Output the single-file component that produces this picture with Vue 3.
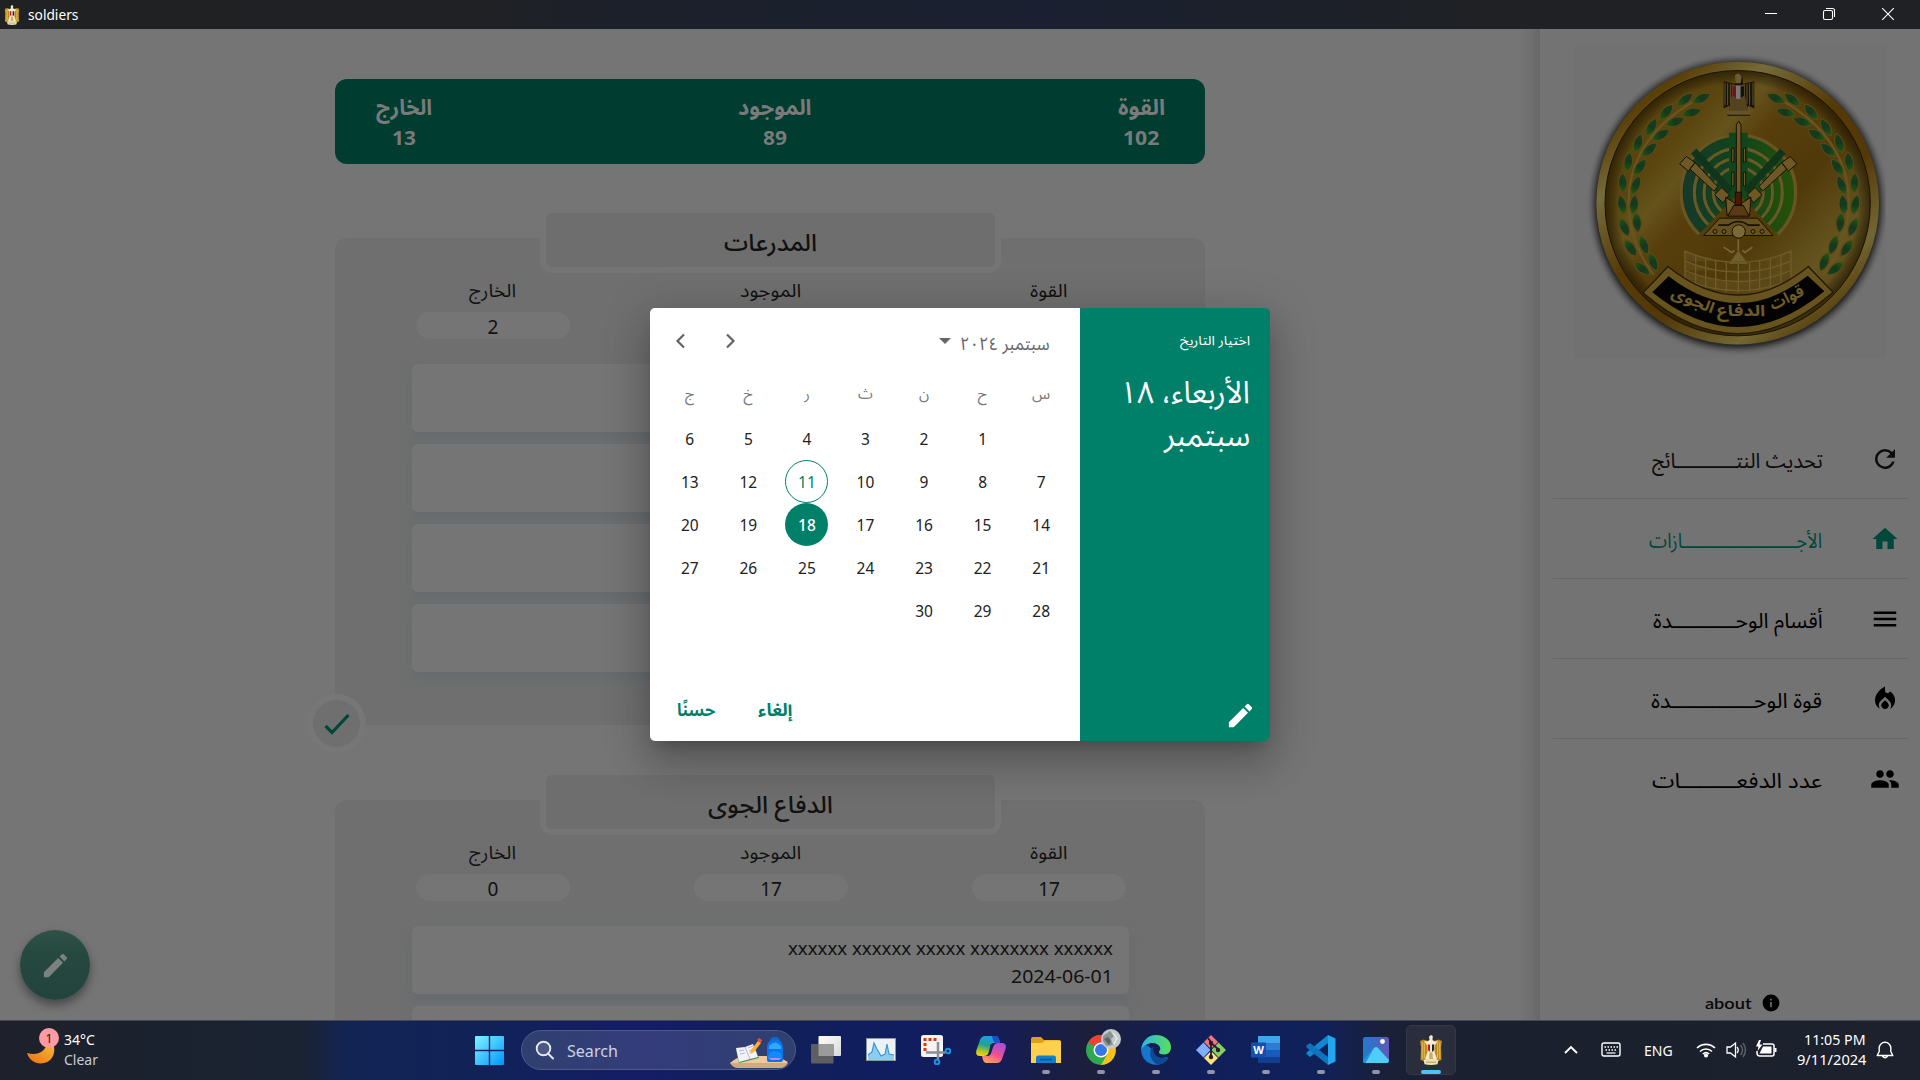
<script setup>
const vFit = {
  mounted(el, { value }) {
    const natural = el.offsetWidth
    if (!natural) return
    el.style.transform = `scaleX(${value / natural})`
    el.style.marginRight = `${value - natural}px`
  },
}

const totals = [
  { label: 'الخارج', w: 56, n: '13', nw: 24 },
  { label: 'الموجود', w: 74, n: '89', nw: 24 },
  { label: 'القوة', w: 47, n: '102', nw: 36 },
]
const units = [
  { name: 'المدرعات', w: 93, stats: ['2', '', ''], rows: [{}, {}, {}, {}] },
  {
    name: 'الدفاع الجوى', w: 125, stats: ['0', '17', '17'],
    rows: [{ name: 'xxxxxx xxxxxx xxxxx xxxxxxxx xxxxxx', date: '2024-06-01' }, {}],
  },
]
const statLabels = [
  { t: 'الخارج', w: 47 },
  { t: 'الموجود', w: 61 },
  { t: 'القوة', w: 38 },
]
const menu = [
  { t: 'تحديث النتـــــــــــائج', w: 171, d: ['M17.65 6.35A7.96 7.96 0 0 0 12 4a8 8 0 1 0 7.73 10h-2.08A6 6 0 1 1 12 6c1.66 0 3.14.69 4.22 1.78L13 11h7V4z'], c: '#0c0c0c' },
  { t: 'الأجـــــــــــــــــــــــازات', w: 173, d: ['M10 20v-6h4v6h5v-8h3L12 3 2 12h3v8z'], c: '#00483a' },
  { t: 'أقسام الوحـــــــــــدة', w: 170, d: ['M3 18h18v-2H3zm0-5h18v-2H3zm0-7v2h18V6z'], c: '#000' },
  { t: 'قوة الوحــــــــــــــدة', w: 171, d: ['M12 12.9l-2.13 2.09c-.56.56-.87 1.29-.87 2.07C9 18.68 10.35 20 12 20s3-1.32 3-2.94c0-.78-.31-1.52-.87-2.07z', 'M16 6l-.44.55C14.38 8.02 12 7.19 12 5.3V2S4 6 4 13c0 2.92 1.56 5.47 3.89 6.86C7.33 19.07 7 18.1 7 17.06c0-1.32.52-2.56 1.47-3.5L12 10.1l3.53 3.47c.95.93 1.47 2.17 1.47 3.5 0 1.02-.31 1.96-.85 2.75 1.89-1.15 3.29-3.06 3.71-5.3C20.52 10.97 18.79 7.62 16 6z'], c: '#000' },
  { t: 'عدد الدفعـــــــــات', w: 170, d: ['M16 11c1.66 0 2.99-1.34 2.99-3S17.66 5 16 5s-3 1.34-3 3 1.34 3 3 3zm-8 0c1.66 0 2.99-1.34 2.99-3S9.66 5 8 5 5 6.34 5 8s1.34 3 3 3zm0 2c-2.33 0-7 1.17-7 3.5V19h14v-2.5c0-2.33-4.67-3.5-7-3.5zm8 0c-.29 0-.62.02-.97.05 1.16.84 1.97 1.97 1.97 3.45V19h6v-2.5c0-2.33-4.67-3.5-7-3.5z'], c: '#000' },
]
const weekdays = ['ج', 'خ', 'ر', 'ث', 'ن', 'ح', 'س']
const weeks = [
  [6, 5, 4, 3, 2, 1, ''],
  [13, 12, 11, 10, 9, 8, 7],
  [20, 19, 18, 17, 16, 15, 14],
  [27, 26, 25, 24, 23, 22, 21],
  ['', '', '', '', 30, 29, 28],
]
const pencil = 'M3 17.25V21h3.75L17.81 9.94l-3.75-3.75zM20.71 7.04a1 1 0 0 0 0-1.41l-2.34-2.34a1 1 0 0 0-1.41 0l-1.83 1.83 3.75 3.75z'
const leaves = [
  [466, 299, -38], [410, 336, -50], [365, 382, -60], [325, 430, -72], [296, 486, -82], [279, 549, -92], [277, 614, -102], [284, 682, 66], [303, 745, 54], [337, 806, 38],
  [515, 296, -26], [486, 338, -14], [436, 366, -20], [394, 405, -32], [359, 450, -42], [331, 502, -55], [318, 556, -68], [313, 614, -84], [322, 668, 84], [343, 736, 70], [370, 786, 68],
]
const rings = [132, 103, 75]
const apps = ['taskview', 'monitor', 'snip', 'copilot', 'files', 'chrome', 'edge', 'git', 'word', 'code', 'photos', 'eagle']
</script>

<template>
  <div class="screen">
    <svg class="defs" width="0" height="0">
      <defs>
        <symbol id="eagle" viewBox="0 0 24 30">
          <path d="M1 6l3.500-1.500L9 6h6l4.500-1.500L23 6l-1 6 .5 13-3.500 1-3-4-2-5h-4l-2 5-3 4-3.500-1L2 12z" fill="#b98a1c" />
          <path d="M3.200 7v17M5.300 7.500V23M18.700 7.500V23M20.800 7v17" stroke="#ecc75a" stroke-width=".9" fill="none" />
          <path d="M10 1.800L12 0l1.800 1-.3 4 2.500 1.500 3-.5-3 4-.5 7 2.500 7h-12l2.500-7L8 10 5 6l3 .5L10.500 5z" fill="#f3ead2" />
          <path d="M8.800 9.500h2.200v7.500l-2.200-2z" fill="#d0122c" /><path d="M13 9.500h2.200V15L13 17z" fill="#222" />
          <path d="M10.500 18l1.500-1 1.500 1 .5 6h-4z" fill="#c9ac62" />
          <path d="M4.500 25q3.500-2 7.500-1 4-1 7.500 1l-1 4.300q-6.500 1.200-13 0z" fill="#ede0b8" /><path d="M7 27.200h10" stroke="#b58d2c" stroke-width=".8" />
        </symbol>
      </defs>
    </svg>

    <header class="titlebar">
      <svg class="t-ico" width="16" height="20"><use href="#eagle" /></svg>
      <span class="t-name" v-fit="50">soldiers</span>
      <svg class="t-ctl" width="150" height="29" viewBox="0 0 150 29" fill="none" stroke="#fff" stroke-width="1.100">
        <path d="M15 13.500h12M132.200 8.200l11.600 11.600M143.800 8.200l-11.600 11.600" />
        <rect x="73.500" y="10.500" width="9" height="9" rx="1.500" /><path d="M76 8.500h6.500a2 2 0 0 1 2 2V17" />
      </svg>
    </header>

    <div class="app">
      <main class="main">
        <section class="totals">
          <div v-for="s in totals" :key="s.label" class="total">
            <span class="lbl" dir="rtl" v-fit="s.w">{{ s.label }}</span>
            <span class="num" v-fit="s.nw">{{ s.n }}</span>
          </div>
        </section>

        <section v-for="(u, i) in units" :key="u.name" class="unit">
          <h2 class="tab"><span dir="rtl" v-fit="u.w">{{ u.name }}</span></h2>
          <div class="stats">
            <div v-for="(s, k) in u.stats" :key="k" class="stat">
              <div class="slabel"><span dir="rtl" v-fit="statLabels[k].w">{{ statLabels[k].t }}</span></div>
              <div class="pill">{{ s }}</div>
            </div>
          </div>
          <div class="rows">
            <article v-for="(r, k) in u.rows" :key="k" class="row">
              <div v-if="r.name"><span v-fit="325">{{ r.name }}</span></div>
              <div v-if="r.date"><span v-fit="102">{{ r.date }}</span></div>
            </article>
          </div>
          <div v-if="i === 0" class="check">
            <svg width="30" height="30" viewBox="0 0 30 30"><path d="M3.500 17l6.500 6.500L26.500 6" fill="none" stroke="#00473a" stroke-width="3.200" /></svg>
          </div>
        </section>

        <button class="fab"><svg width="31" height="31" viewBox="0 0 24 24"><path :d="pencil" fill="#7b8180" /></svg></button>
      </main>

      <aside class="side">
        <svg class="emblem" width="312" height="313" viewBox="133 136 936 938">
          <defs>
            <linearGradient id="rim" x1=".1" y1="0" x2=".9" y2="1">
              <stop offset="0" stop-color="#6b6232" /><stop offset=".12" stop-color="#5a3f08" /><stop offset=".25" stop-color="#756b3a" /><stop offset=".45" stop-color="#563a06" /><stop offset=".62" stop-color="#543908" /><stop offset=".8" stop-color="#716733" /><stop offset=".92" stop-color="#553a08" /><stop offset="1" stop-color="#6e6433" />
            </linearGradient>
            <linearGradient id="face" x1="0" y1=".05" x2="1" y2=".95">
              <stop offset="0" stop-color="#55410d" /><stop offset=".25" stop-color="#5a450f" /><stop offset=".33" stop-color="#65531c" /><stop offset=".42" stop-color="#573e0c" /><stop offset=".6" stop-color="#50390a" /><stop offset=".78" stop-color="#655520" /><stop offset="1" stop-color="#54400f" />
            </linearGradient>
            <radialGradient id="inner"><stop offset=".9" stop-color="#000" stop-opacity="0" /><stop offset="1" stop-color="#1a1000" stop-opacity=".6" /></radialGradient>
            <radialGradient id="halo"><stop offset=".93" stop-color="#2b2b2b" /><stop offset=".955" stop-color="#484848" stop-opacity=".75" /><stop offset="1" stop-color="#717171" stop-opacity="0" /></radialGradient>
            <linearGradient id="grn"><stop offset="0" stop-color="#17382a" /><stop offset=".5" stop-color="#0f451b" /><stop offset="1" stop-color="#285207" /></linearGradient>
            <linearGradient id="leaf"><stop offset="0" stop-color="#1d5a12" /><stop offset=".5" stop-color="#14381d" /><stop offset="1" stop-color="#173f1e" /></linearGradient>
            <clipPath id="disc"><path d="M626 580L748 708H870V340H380V708H504z" /></clipPath>
            <clipPath id="eclip"><rect x="133" y="136" width="936" height="938" /></clipPath>
          </defs>
          <rect x="133" y="136" width="936" height="938" fill="#717171" />
          <circle cx="624" cy="614" r="456" fill="url(#halo)" clip-path="url(#eclip)" />
          <circle cx="624" cy="610" r="424" fill="url(#rim)" />
          <circle cx="624" cy="610" r="398" fill="url(#face)" stroke="#1c1405" stroke-width="3" />
          <circle cx="624" cy="610" r="398" fill="url(#inner)" />
          <g v-for="m in [0, 1]" :key="m" :transform="m ? 'translate(1254 0) scale(-1 1)' : ''">
            <path d="M520 290C400 350 300 450 297 600C295 700 330 770 372 825" fill="none" stroke="#6a5520" stroke-width="7" />
            <path v-for="(l, k) in leaves" :key="k" d="M-30 0C-15 -17 13 -17 30 0C13 17 -15 17 -30 0z" :transform="`translate(${l[0]} ${l[1]}) rotate(${l[2]})`" fill="url(#leaf)" stroke="#5d4a18" stroke-width="3" />
          </g>
          <g clip-path="url(#disc)">
            <circle cx="626" cy="578" r="176" fill="url(#grn)" />
            <circle cx="626" cy="578" r="172" fill="none" stroke="#6a5421" stroke-width="10" />
            <circle v-for="r in rings" :key="r" cx="626" cy="578" :r="r" fill="none" stroke="#6a5826" stroke-width="9" />
            <path d="M598 399h56v187h-56z" fill="#11451c" />
            <path d="M484 462l16-16 110 120-14 16zM768 462l-16-16-110 120 14 16z" fill="#11351a" />
          </g>
          <g fill="#6d5826" stroke="#181004" stroke-width="3">
            <path d="M620 375l7-11 7 11v205h-14zM606 445h7v42h-7zM641 445h7v42h-7zM606 517h7v42h-7zM641 517h7v42h-7z" />
            <g v-for="m in [0, 1]" :key="m" :transform="m ? 'translate(1252 0) scale(-1 1)' : ''">
              <path d="M470 470l26 18-20 26-26-22zM496 488l68 72-11 14-72-66zM576 563l23 22-19 24-25-24zM588 592l28 18v18l-24 18z" />
            </g>
            <path d="M617 577h18v38h-18z" fill="#471906" /><path d="M612 617h29l18 32h-65z" fill="#5a3a10" />
            <path d="M570 655h114l46 52H522z" fill="#65511f" /><path d="M566 676h30q30-22 60 0h34" fill="none" stroke-width="5" />
            <circle cx="556" cy="695" r="6" /><circle cx="583" cy="695" r="6" /><circle cx="670" cy="695" r="6" /><circle cx="697" cy="695" r="6" />
            <circle cx="627" cy="695" r="20" fill="#786936" />
          </g>
          <path d="M626 718v35M582 742l24 16 8-6M668 742l-22 16-8-6" fill="none" stroke="#77683a" stroke-width="5" />
          <path d="M626 752l28 40h-56z" fill="#706030" />
          <g fill="none" stroke="#6d5c27" stroke-width="4">
            <path d="M466 754Q626 822 784 754V840Q626 905 466 840zM466 784Q626 850 784 784M466 812Q626 878 784 812" fill="#5b4717" />
            <path d="M498 766v90M528 776v90M558 783v88M590 788v88M626 790v88M660 788v88M690 783v88M722 776v90M754 766v90" />
          </g>
          <path d="M415 800Q626 971 836 800L910 877Q626 1125 340 879z" fill="#67531d" stroke="#251a06" stroke-width="4" />
          <path d="M417 829Q626 991 834 828L884 874Q626 1087 368 877z" fill="#030303" />
          <g class="motto" fill="#6f5b28" text-anchor="middle">
            <text transform="translate(778 908) rotate(-26)" font-size="46" textLength="108" lengthAdjust="spacingAndGlyphs">قوات</text>
            <text transform="translate(634 949)" font-size="46" textLength="146" lengthAdjust="spacingAndGlyphs">الدفاع</text>
            <text transform="translate(484 916) rotate(22)" font-size="46" textLength="136" lengthAdjust="spacingAndGlyphs">الجوى</text>
          </g>
          <path d="M582 244l34 8 2-22 10-10 10 10 2 22 34-8v82l-18-8-6 10 12 20h-70l12-20-6-10-16 8z" fill="#18130a" />
          <path d="M586 248v68M594 250v66M602 252v60M652 252v60M660 250v66M670 248v68" stroke="#66542a" stroke-width="3" />
          <path d="M606 252q20 10 40 0v34l10 54h-60l10-54z" fill="#54431e" /><path d="M616 226q12-12 20 4l-3 20h-16z" fill="#6b5a32" />
          <path d="M609 260h10v34l-10-6z" fill="#7a0c22" /><path d="M619 257h14v40h-14z" fill="#777" /><path d="M633 260h10v28l-10 6z" fill="#111" />
          <path d="M592 333h72l-4 12h-64z" fill="#66532a" />
        </svg>
        <nav class="menu">
          <div v-for="m in menu" :key="m.t" class="item" :style="{ color: m.c }">
            <span class="mtext" dir="rtl" v-fit="m.w">{{ m.t }}</span>
            <svg width="30" height="30" viewBox="0 0 24 24" fill="currentColor"><path v-for="d in m.d" :key="d" :d="d" /></svg>
          </div>
        </nav>
        <div class="about">
          <span v-fit="46">about</span>
          <svg width="18" height="18" viewBox="0 0 18 18"><circle cx="9" cy="9" r="8.400" /><path d="M9 8v5.200M9 4.700v1.800" stroke="#737373" stroke-width="1.600" /></svg>
        </div>
      </aside>
    </div>

    <footer class="taskbar">
      <div class="weather">
        <svg width="36" height="48" viewBox="0 0 36 48">
          <defs><linearGradient id="moon" x1="1" y1="0" x2=".3" y2="1"><stop offset="0" stop-color="#f8c63c" /><stop offset="1" stop-color="#ee7a16" /></linearGradient></defs>
          <path d="M25 12C31 22 29 35 18 37C10 39 3 34 1 27C11 30 20 26 21 16z" fill="url(#moon)" />
          <circle cx="23" cy="12" r="10" fill="#ff99a4" />
          <text x="23" y="17" text-anchor="middle" font-size="13" fill="#222">1</text>
        </svg>
        <div class="wtext"><span v-fit="31">34°C</span><span class="dim" v-fit="34">Clear</span></div>
      </div>
      <svg class="start" width="29" height="29" viewBox="0 0 29 29">
        <defs><linearGradient id="win" x1="0" y1="0" x2="1" y2="1"><stop offset="0" stop-color="#80f3ff" /><stop offset="1" stop-color="#0096ff" /></linearGradient></defs>
        <path d="M0 1q0-1 1-1h12.800v13.800H0zM15.200 0H28q1 0 1 1v12.800H15.200zM0 15.200h13.800V29H1q-1 0-1-1zM15.200 15.200H29V28q0 1-1 1H15.200z" fill="url(#win)" />
      </svg>
      <div class="search">
        <svg width="20" height="20" viewBox="0 0 20 20" fill="none" stroke="#e6e8f2" stroke-width="1.900"><circle cx="8.500" cy="8.500" r="6.800" fill="#ffffff22" /><path d="M13 13.500l5 5" stroke-linecap="round" /></svg>
        <span v-fit="51">Search</span>
        <svg class="s-art" width="58" height="32" viewBox="0 0 58 32">
          <path d="M0 26q7-6 14-7h32q7 3 12 6l-5 4H6z" fill="#ecc99e" /><path d="M0 26h58q-3 5-8 5H8q-5 0-8-5z" fill="#d2aa7b" />
          <path d="M6 13l18-4 5 12-20 5z" fill="#3e9b4f" /><path d="M6 11l9-1 8-3 5 13-8 2-11 3z" fill="#f4f2fb" /><path d="M15 10l5 12M9 14l5-1M10 17l5-1M18 11l5-2M19 14l5-2" stroke="#b9b4cf" />
          <path d="M21 13l7-9 3 2-7 9-4 2z" fill="#ffb02e" /><path d="M27 3l2-2 3 2-1 3z" fill="#f04b3b" />
          <path d="M41 3q4-5 8 0" fill="none" stroke="#1267c9" stroke-width="2" />
          <path d="M37 10q1-8 8-8t8 8v13q0 2-2 2H39q-2 0-2-2z" fill="#0a75ea" /><path d="M39 9q6-7 12 0v3H39z" fill="#35a7ff" /><path d="M38 20q1-6 7-6t7 6v2H38z" fill="#118aff" /><path d="M39 21h12l-2 2H41z" fill="#b58bfa" />
        </svg>
      </div>
      <div class="apps">
        <div v-for="a in apps" :key="a" class="slot" :class="{ active: a === 'eagle', run: apps.indexOf(a) > 3 }">
          <svg width="30" height="30" viewBox="0 0 30 30">
            <template v-if="a === 'taskview'">
              <defs><linearGradient id="tv" x1="0" y1="0" x2="1" y2="1"><stop offset="0" stop-color="#fff" /><stop offset="1" stop-color="#d9d9d9" /></linearGradient></defs>
              <rect x="7.500" y="1" width="22.500" height="20" rx="1" fill="url(#tv)" /><rect x="0" y="9" width="22.500" height="19.500" rx="1" fill="#5e5e60" /><rect x="7.500" y="9" width="15" height="12" fill="#9b9b9b" />
            </template>
            <template v-else-if="a === 'monitor'">
              <rect x=".5" y="3.500" width="29" height="22" fill="#edf2f6" stroke="#8b97a3" /><path d="M2 20l4-3 2-9 3 6 4 7 4-2 2-10 2 10 5 1v5H2z" fill="#8bcdf2" /><path d="M2 20l4-3 2-9 3 6 4 7 4-2 2-10 2 10 5 1" fill="none" stroke="#3c96cf" stroke-width="1.200" />
            </template>
            <template v-else-if="a === 'snip'">
              <rect width="22" height="22" rx="2.500" fill="#f4f4f4" /><path d="M4 16V4.500h13" fill="none" stroke="#d83b01" stroke-width="3" stroke-dasharray="3 2" />
              <path d="M5 17.500h19M17 7v17" stroke="#8b9096" stroke-width="2.500" /><circle cx="27" cy="16" r="2.300" fill="none" stroke="#1c93e0" stroke-width="2" /><circle cx="16" cy="27" r="2.300" fill="none" stroke="#1c93e0" stroke-width="2" />
            </template>
            <template v-else-if="a === 'copilot'">
              <defs><linearGradient id="cp1" x1=".5" x2=".2" y2="1"><stop offset="0" stop-color="#1f9dea" /><stop offset=".45" stop-color="#1fa391" /><stop offset=".75" stop-color="#a9c42a" /><stop offset="1" stop-color="#ffd500" /></linearGradient><linearGradient id="cp2" x1=".8" x2=".3" y2="1"><stop offset="0" stop-color="#a04fe0" /><stop offset=".55" stop-color="#ee4f93" /><stop offset="1" stop-color="#ffa05b" /></linearGradient></defs>
              <path d="M9 1h11q2 0 3 3l1 4h-5q-3 0-4 3l-2 6q-1 4-5 4H4q-5 0-3.500-6L4 5q1.500-4 5-4z" fill="url(#cp1)" /><path d="M16 1h4q2 0 3 3l1 4h-4q-2 0-3-3z" fill="#1a50c8" />
              <path d="M21 28H10q-2 0-3-3l-1-4h5q3 0 4-3l2-6q1-4 5-4h4q5 0 3.500 6L26 24q-1.500 4-5 4z" fill="url(#cp2)" />
              <path d="M14.500 9.500L17 8h3q-2 1-3 4l-2 6q-.6 1.800-2 2.600L10.500 21q1.700-1 2.500-4z" fill="#16205c" />
            </template>
            <template v-else-if="a === 'files'">
              <path d="M0 4q0-2 2-2h8l3 3h15q2 0 2 2v4H0z" fill="#e0a013" /><path d="M0 8h11l3-2.500h14q2 0 2 2V28H0z" fill="#ffd04c" /><path d="M5 28v-5q0-2.500 2.500-2.500h15q2.500 0 2.500 2.500v5z" fill="#1779cf" /><path d="M9 24.500h12" stroke="#0b4f91" stroke-width="1.400" />
            </template>
            <template v-else-if="a === 'chrome'">
              <circle cx="15" cy="15" r="15" fill="#2da94f" /><path d="M15 15L2 7.500A15 15 0 0 1 28 7.500H15z" fill="#ea4335" /><path d="M15 8h13a15 15 0 0 1-13 22l6.500-11z" fill="#fbc116" /><circle cx="15" cy="15" r="7.500" fill="#fff" /><circle cx="15" cy="15" r="6" fill="#3577e5" />
            </template>
            <template v-else-if="a === 'edge'">
              <defs><linearGradient id="ed1"><stop offset="0" stop-color="#2cb4e8" /><stop offset="1" stop-color="#5ae05a" /></linearGradient></defs>
              <path d="M0 15A15 15 0 0 0 26 25Q28 22 25 22Q16 25 12 18Q10 10 3 10Z" fill="#1476cc" />
              <path d="M0 15C1 6 7 0 15 0c9 0 15 6 15 12 0 5-3 7.500-7 7.500-3 0-5-1-5-2.300s2-2.200 1-5C17 7 6 5 0 15z" fill="url(#ed1)" />
              <path d="M12.500 11.500C7 14 8 26 17 29.800c4-.3 7-2.300 9-4.800q1.500-2.500-1-2.500C17 25 11 19 12.500 11.500z" fill="#0c4a94" />
              <path d="M18.500 13c-2.500-2.500-5.500-1.500-6.300 1.500" fill="none" stroke="#13245a" stroke-width="1.500" />
            </template>
            <template v-else-if="a === 'git'">
              <path d="M15 0l7 7-7 7-7-7z" fill="#f8727b" /><path d="M7.500 7.500l7 7.500-7 7.500L0 15z" fill="#7fb0ff" /><path d="M22.500 7.500L30 15l-7.500 7.500-7-7.500z" fill="#88cf5b" /><path d="M15 16l7 7-7 7-7-7z" fill="#ffe07a" />
              <path d="M12 3l3 4v15M15 8l7 6" stroke="#221d33" stroke-width="1.800" fill="none" /><circle cx="15" cy="8" r="2.200" fill="#221d33" /><circle cx="15" cy="22" r="2.200" fill="#221d33" /><circle cx="22" cy="15" r="2.200" fill="#221d33" />
            </template>
            <template v-else-if="a === 'word'">
              <path d="M7 1h22v7H7z" fill="#41a5ee" /><path d="M7 8h22v7H7z" fill="#2b7cd3" /><path d="M7 15h22v7H7z" fill="#185abd" /><path d="M7 22h22v6H7z" fill="#103f91" /><rect x="0" y="7.500" width="15" height="15" rx="1" fill="#1650ad" /><text x="7.500" y="19" font-size="11" font-weight="700" text-anchor="middle" fill="#fff">W</text>
            </template>
            <template v-else-if="a === 'code'">
              <path d="M22 0l7.500 3.500v23L22 30z" fill="#23a5f0" /><path d="M22 0v8L4 22l-3.500-3v-1.500z" fill="#1386d4" /><path d="M22 30v-8L4 8 .5 10.500v2z" fill="#0c75bd" />
            </template>
            <template v-else-if="a === 'photos'">
              <defs><linearGradient id="ph" x1="0" x2="1"><stop offset="0" stop-color="#1f7bd0" /><stop offset="1" stop-color="#6059b6" /></linearGradient></defs>
              <rect x="2" y="2" width="26" height="26" rx="2.500" fill="url(#ph)" /><path d="M2.500 26L13 13q2-2 4 0l11 12q0 3-2.500 3H5z" fill="#4dcdf8" /><path d="M13 13L4.500 28H3q-1-1-1-3z" fill="#1e93da" /><circle cx="21.500" cy="6.500" r="2.400" fill="#fff" />
            </template>
            <use v-else href="#eagle" x="3" y="0" width="24" height="30" />
          </svg>
          <svg v-if="a === 'chrome'" class="avatar" width="20" height="20" viewBox="0 0 20 20"><circle cx="10" cy="10" r="10" fill="#c3c9c9" /><path d="M2 7l7-5 4 5-3 3 2 6-7 1-3-5z" fill="#8b9494" /><path d="M3 10l4-2 3 4-2 4z" fill="#5b6464" /><path d="M12 4l4 5-3 6" stroke="#e6eaea" fill="none" stroke-width="1.500" /></svg>
        </div>
      </div>
      <div class="tray">
        <svg width="190" height="60" viewBox="1550 1020 190 60" fill="none" stroke="#fff" stroke-width="1.600">
          <path d="M1565 1053l6-6 6 6" stroke-width="1.900" />
          <rect x="1602" y="1043" width="18" height="13" rx="2" stroke-width="1.400" /><path d="M1604.500 1047h14M1605.500 1050h12" stroke-dasharray="1.500 1.500" /><path d="M1606.500 1053h9" stroke-width="1.200" />
          <g transform="translate(-.5 0)"><path d="M1697.500 1048a13 13 0 0 1 18 0M1700.500 1051.500a8.500 8.500 0 0 1 12 0M1703.300 1054a5 5 0 0 1 6.400 0" /><circle cx="1706.500" cy="1055.500" r="1.300" fill="#fff" /></g>
          <path d="M1727 1047h3.500l5-4v14l-5-4h-3.500z" stroke-width="1.300" /><path d="M1737 1047q2.500 3 0 6" stroke-width="1.300" />
        </svg>
        <svg width="40" height="60" viewBox="1740 1020 40 60" fill="none" stroke="#fff" stroke-width="1.500">
          <path d="M1740.500 1045q4 5 0 10M1743 1043q5 7 0 14" stroke="#5b606b" />
          <path d="M1763 1044h9q2 0 2 2v8q0 2-2 2h-12q-3 0-3-3v-2" /><path d="M1775.500 1048v4" stroke-width="2" /><path d="M1763 1046.500h8.500v7h-12z" fill="#fff" stroke="none" /><path d="M1759 1040l-3 6.500h2.500l-1 4.500 5-6.500h-3l1.500-4.500z" fill="#fff" stroke="none" />
        </svg>
        <span class="eng"><span v-fit="29">ENG</span></span>
        <div class="clock"><span v-fit="62">11:05 PM</span><span v-fit="69">9/11/2024</span></div>
        <svg class="bell" width="18" height="20" viewBox="0 0 18 20" fill="none" stroke="#fff" stroke-width="1.400"><path d="M1.200 15.500l2-4V8a5.800 5.800 0 0 1 11.600 0v3.500l2 4zM6.500 16q2.500 3.500 5 0" stroke-linejoin="round" /></svg>
      </div>
    </footer>

    <div class="dialog" role="dialog">
      <div class="cal">
        <div class="chead">
          <svg width="100" height="24" viewBox="0 0 100 24" fill="none" stroke="#636363" stroke-width="2.200"><path d="M23 5.500l-6.500 6.500 6.500 6.500M66 5.500l6.500 6.500-6.500 6.500" /></svg>
          <svg class="caret" width="12" height="6" viewBox="0 0 12 6"><path d="M0 0h12L6 6z" fill="#666" /></svg>
          <span class="month" dir="rtl" v-fit="90">سبتمبر ٢٠٢٤</span>
        </div>
        <div class="grid wd"><span v-for="d in weekdays" :key="d">{{ d }}</span></div>
        <div v-for="(w, i) in weeks" :key="i" class="grid">
          <span v-for="(d, k) in w" :key="k" class="day" :class="{ today: d === 11, sel: d === 18 }"><i>{{ d }}</i></span>
        </div>
        <div class="actions"><span dir="rtl" v-fit="38">حسنًا</span><span dir="rtl" v-fit="34">إلغاء</span></div>
      </div>
      <div class="hero">
        <div class="cap"><span dir="rtl" v-fit="70">اختيار التاريخ</span></div>
        <div class="big"><span dir="rtl" v-fit="130">الأربعاء، ١٨</span></div>
        <div class="big"><span dir="rtl" v-fit="86">سبتمبر</span></div>
        <svg class="pen" width="31" height="31" viewBox="0 0 24 24"><path :d="pencil" fill="#fff" /></svg>
      </div>
    </div>
  </div>
</template>

<style>
body { margin: 0; background: #757575; overflow: hidden; }
</style>

<style scoped>
.screen { position: relative; width: 1920px; height: 1080px; display: flex; flex-direction: column; overflow: hidden; background: #757575; font-family: "Noto Sans", "Noto Sans Arabic", "DejaVu Sans", sans-serif; color: #111; }
.defs { position: absolute; }
span { display: inline-block; white-space: nowrap; transform-origin: left center; }
svg { display: block; flex: none; }
.titlebar { height: 29px; flex: none; display: flex; align-items: center; background: linear-gradient(90deg, #1f2123 0, #1f2124 460px, #1c202b 640px, #1a2031 1050px, #1c2029 1300px, #1f2124 1500px); color: #fff; font-size: 14px; }
.t-ico { margin: 0 8px 0 4px; }
.t-name { line-height: 29px; }
.t-ctl { margin-left: auto; margin-right: 20px; }
.app { flex: 1; min-height: 0; display: flex; }
.main { position: relative; width: 1540px; height: 991px; padding: 50px 0 0 335px; box-sizing: border-box; overflow: hidden; background: linear-gradient(90deg, transparent 1518px, #6f6f6f 1532px, #666 1540px); }
.totals { width: 870px; height: 85px; box-sizing: border-box; padding: 11px 40px 0 41px; border-radius: 12px; background: #003d30; display: flex; justify-content: space-between; color: #7a7a7a; font-weight: 700; }
.total { display: flex; flex-direction: column; align-items: center; }
.lbl { font-size: 22px; line-height: 32px; height: 32px; }
.num { font-size: 20px; line-height: 32px; }
.unit { position: relative; width: 870px; height: 487px; margin-top: 74px; border-radius: 12px; background: #6f6f6f; }
.unit + .unit { margin-top: 75px; }
.tab { position: absolute; left: 205px; top: -31px; width: 449px; height: 54px; margin: 0; border: 6px solid #757575; border-radius: 12px; background: #6e6e6e; text-align: center; font-size: 24px; font-weight: 500; line-height: 57px; }
.stats { padding: 37px 79.500px 0 80.500px; display: flex; justify-content: space-between; }
.stat { width: 154px; text-align: center; }
.slabel { font-size: 18.500px; height: 37px; line-height: 30px; }
.pill { height: 27px; border-radius: 14px; background: #757575; font-size: 19px; line-height: 30px; padding-left: 1px; }
.rows { margin: 25px 76.500px 0; display: flex; flex-direction: column; gap: 12px; }
.row { height: 68px; box-sizing: border-box; padding: 9px 15.500px 0; border-radius: 6px; background: #757575; box-shadow: 0 6px 12px #666b70; text-align: right; font-size: 18px; line-height: 27.500px; }
.check { position: absolute; left: -28px; top: 456px; width: 47px; height: 47px; border: 6px solid #777; border-radius: 50%; background: #6f6f6f; display: grid; place-items: center; }
.fab { position: absolute; left: 20px; top: 901px; width: 70px; height: 70px; border: 0; border-radius: 50%; padding: 0; display: grid; place-items: center; background: linear-gradient(#2f5149, #25483f 35%, #23443d); box-shadow: 0 5px 10px #0006; }
.side { width: 380px; background: #737373; display: flex; flex-direction: column; }
.emblem { margin: 16px 0 0 34px; }
.motto { font-weight: 700; }
.menu { margin: 61px 12.500px 0; }
.item { height: 80px; box-sizing: border-box; border-bottom: 1px solid #666; display: flex; align-items: center; justify-content: flex-end; padding-right: 8px; font-size: 21px; }
.item:last-child { border: 0; }
.mtext { line-height: 30px; position: relative; top: 1px; }
.item svg { margin-left: 47px; }
.about { display: flex; align-items: center; gap: 11px; margin: 175px 0 0 165px; font-size: 15px; font-weight: 600; color: #080808; line-height: 18px; font-family: Lato, "Noto Sans", sans-serif; }
.taskbar { position: relative; height: 60px; flex: none; box-sizing: border-box; display: flex; align-items: center; box-shadow: inset 0 1px #44495a; background: linear-gradient(90deg, #1e212b 0, #1b222e 120px, #1a2332 300px, #122454 350px, #112258 480px, #141d66 640px, #112059 760px, #101d60 900px, #151d58 990px, #1c1e3b 1090px, #101f5b 1190px, #10215a 1320px, #1a2036 1390px, #1b202e 1500px, #1c212d 1920px); }
.weather { width: 449px; padding-left: 26px; display: flex; }
.wtext { display: flex; flex-direction: column; align-items: flex-start; margin: 4px 0 0 2px; color: #fff; font-size: 14px; line-height: 20px; }
.dim { color: #c8ccd4; }
.start { margin-top: 1px; }
.search { margin-left: 17px; width: 275px; height: 40px; box-sizing: border-box; border: 1px solid #515a86; border-radius: 20px; background: linear-gradient(90deg, #2f406f, #343c7c 45%, #2f4070); display: flex; align-items: center; padding-left: 13px; gap: 12px; color: #ced2e2; font-size: 17px; }
.s-art { margin: 5px 0 0 auto; padding-right: 7px; }
.apps { display: flex; margin-left: 2px; }
.slot { position: relative; width: 55px; height: 60px; display: grid; place-items: center; }
.slot > svg { position: relative; }
.run::after { content: ""; position: absolute; left: 23.500px; top: 50px; width: 8px; height: 4px; border-radius: 2px; background: #9195a5; }
.active::before { content: ""; position: absolute; left: 2.500px; top: 5px; width: 50px; height: 50px; box-sizing: border-box; border: 1px solid #343846; border-radius: 5px; background: #292d3c; }
.active::after { left: 17.500px; width: 20px; background: #4cc2ff; }
.slot > .avatar { position: absolute; left: 28px; top: 9px; }
.tray { position: relative; display: flex; align-items: center; margin-left: 92px; color: #fff; font-size: 14px; }
.eng { position: absolute; left: 94px; top: 20px; line-height: 22px; }
.clock { width: 86px; display: flex; flex-direction: column; align-items: flex-end; line-height: 20px; }
.bell { margin-left: 10px; }
.dialog { position: absolute; left: 650px; top: 308px; width: 620px; height: 433px; border-radius: 5px; overflow: hidden; display: flex; box-shadow: 0 11px 15px -7px #0003, 0 24px 38px 3px #00000024, 0 9px 46px 8px #0000001f; }
.cal { width: 430px; background: #fff; display: flex; flex-direction: column; }
.chead { height: 66px; box-sizing: border-box; padding: 0 30px 0 10.500px; display: flex; align-items: center; color: #666; font-size: 18px; }
.caret { margin: 0 9px 0 auto; }
.month { margin-top: 6px; }
.grid { display: grid; grid-template-columns: repeat(7, 58.570px); margin-left: 10.500px; height: 43px; text-align: center; font-size: 15.500px; color: #222; }
.grid span { transform: none; }
.wd { height: 86px; margin-bottom: -43px; color: #777; font-size: 15px; line-height: 39px; }
.day { height: 43px; }
.day i { display: grid; place-items: center; font-style: normal; width: 43px; height: 43px; box-sizing: border-box; margin: 0 auto; border-radius: 50%; }
.today i { border: 1.500px solid #008069; color: #008069; }
.sel i { background: #008069; color: #fff; font-weight: 500; }
.actions { margin-top: auto; padding: 0 0 16px 27px; display: flex; gap: 43px; color: #008069; font-size: 17.500px; font-weight: 700; line-height: 32px; }
.hero { position: relative; width: 190px; box-sizing: border-box; padding: 20px 20px 0 0; background: #008069; color: #fff; text-align: right; }
.cap { font-size: 13px; line-height: 24px; margin-bottom: 18px; }
.big { font-size: 31px; line-height: 43px; height: 43px; }
.pen { position: absolute; right: 14px; bottom: 10px; }
</style>
